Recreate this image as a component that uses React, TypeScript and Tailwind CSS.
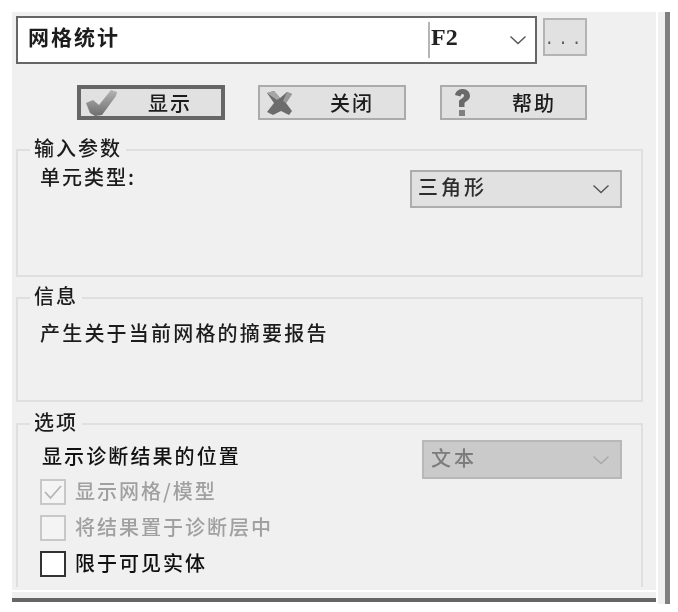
import React from "react";

const Chevron = ({ color = "#555" }: { color?: string }) => (
  <svg width="18" height="10" viewBox="0 0 18 10" fill="none">
    <path d="M1.5 1.5 L9 8.5 L16.5 1.5" stroke={color} strokeWidth="1.4" />
  </svg>
);

const CheckIcon = () => (
  <svg width="34" height="28" viewBox="0 0 34 28">
    <defs>
      <linearGradient id="ck" x1="0" y1="0" x2="0" y2="1">
        <stop offset="0" stopColor="#b4b4b4" />
        <stop offset="1" stopColor="#6e6e6e" />
      </linearGradient>
    </defs>
    <path d="M1 14 L8 11 L14 16 L26 1 L32 3 L31 7 L17 26 L10 27 L5 24 Z" fill="url(#ck)" />
  </svg>
);

const XIcon = () => (
  <svg width="28" height="26" viewBox="0 0 28 26">
    <path d="M1 3 L8 1 L14 8 L21 2 L26 4 L20 13 L26 21 L23 25 L15 21 L7 25 L1 22 L8 13 Z" fill="#6c6c6c" />
    <path d="M1 3 L8 1 L14 8 L11 10 Z" fill="#a6a6a6" />
    <path d="M21 2 L26 4 L20 13 L17 11 Z" fill="#9a9a9a" />
  </svg>
);

const HelpIcon = () => (
  <svg width="16" height="28" viewBox="0 0 16 28">
    <path d="M1 6 C2 1 6 0 9 0 C13 0 16 3 16 7 C16 11 12 12 10.5 14 L10.5 18 L5 18 L5 12 C6 10 10 9 10 6.5 C10 4.5 7 4 6.5 7.5 Z" fill="#6a6a6a" />
    <rect x="5" y="21" width="6" height="6" fill="#808080" />
  </svg>
);

const Btn = ({ children, label, wide, className }: { children: React.ReactNode; label: string; wide?: boolean; className: string }) => (
  <div className={`h-[35px] flex items-center bg-[#e1e1e1] ${wide ? "border-4 border-[#666666]" : "border-2 border-[#ababab]"} ${className}`}>
    <div className={`w-[40px] flex justify-center ${wide ? "ml-[1px]" : "ml-0"}`}>{children}</div>
    <span className={`text-[20px] leading-none tracking-[2px] font-medium text-[#1c1c1c] ${wide ? "ml-[26px]" : "ml-[30px]"}`}>{label}</span>
  </div>
);

const Group = ({ title, children, className, noBottom }: { title: string; children: React.ReactNode; className: string; noBottom?: boolean }) => (
  <fieldset className={`border-2 border-[#dfdfdf] ml-[4px] mr-[13px] px-[22px] ${noBottom ? "border-b-0" : ""} ${className}`}>
    <legend className="ml-[-10px] px-[4px] text-[20px] leading-[24px] tracking-[2px] font-medium text-[#1c1c1c] -translate-y-[2px]">{title}</legend>
    {children}
  </fieldset>
);

const Check = ({ label, state }: { label: string; state: "checked" | "off" | "on" }) => {
  const active = state === "on";
  return (
    <div className="flex items-center h-[26px] gap-[9px]">
      <div className={`w-[26px] h-[26px] flex items-center justify-center border-2 ${active ? "border-[#333] bg-white" : "border-[#c8c8c8] bg-[#f4f4f4]"}`}>
        {state === "checked" && (
          <svg width="20" height="16" viewBox="0 0 20 16" fill="none">
            <path d="M2 8 L7.5 14 L18 2" stroke="#b4b4b4" strokeWidth="1.8" />
          </svg>
        )}
      </div>
      <span className={`text-[20px] leading-none tracking-[2px] font-medium pb-[2px] ${active ? "text-[#111]" : "text-[#a0a0a0]"}`}>{label}</span>
    </div>
  );
};

export default function App() {
  return (
    <div className="w-[678px] h-[612px] bg-white overflow-hidden pt-[12px] pl-[12px] flex items-start" style={{ fontFamily: '"Noto Sans CJK SC", "Noto Sans", sans-serif' }}>
      <div className="w-[644px] shrink-0">
        <div className="h-[578px] bg-[#f0f0f0] pt-[4px] overflow-hidden blur-[0.5px]">
          <div className="flex items-start mx-[4px]">
            <div className="w-[521px] h-[48px] border-2 border-[#666666] bg-white flex items-center pl-[10px] pr-[8px]">
              <span className="w-[400px] text-[21px] font-bold tracking-[2px] text-[#1c1c1c] pb-[6px]">网格统计</span>
              <div className="w-[2px] h-[36px] bg-[#b5b5b5]" />
              <span className="ml-[1px] text-[24px] leading-none font-bold text-[#222] pb-[6px]" style={{ fontFamily: '"Liberation Serif", serif' }}>F2</span>
              <div className="ml-auto"><Chevron /></div>
            </div>
            <div className="ml-[6px] mt-[2px] w-[44px] h-[38px] border-2 border-[#b4b4b4] bg-[#e1e1e1] flex items-center justify-center text-[16px] tracking-[4px] text-[#555] pt-[5px]" style={{ fontFamily: '"Liberation Mono", monospace' }}>...</div>
          </div>

          <div className="flex mt-[21px] ml-[65px] gap-[33px]">
            <Btn label="显示" wide className="w-[148px]"><CheckIcon /></Btn>
            <Btn label="关闭" className="w-[148px]"><XIcon /></Btn>
            <div className="ml-[1px]"><Btn label="帮助" className="w-[147px]"><HelpIcon /></Btn></div>
          </div>

          <Group title="输入参数" className="mt-[18px] h-[139px]">
            <div className="flex items-start">
              <span className="mt-[1px] text-[20px] leading-[28px] tracking-[2px] font-medium text-[#1c1c1c]">单元类型:</span>
              <div className="ml-auto mr-[-3px] mt-[8px] w-[212px] h-[38px] bg-[#e1e1e1] border-2 border-[#adadad] flex items-center pl-[6px] pr-[10px]">
                <span className="text-[20px] leading-none tracking-[3px] font-medium text-[#2c2c2c] pb-[4px]">三角形</span>
                <div className="ml-auto"><Chevron /></div>
              </div>
            </div>
          </Group>

          <Group title="信息" className="mt-[9px] h-[116px]">
            <div className="mt-[11px] text-[20px] leading-[24px] tracking-[2.2px] font-medium text-[#1c1c1c]">产生关于当前网格的摘要报告</div>
          </Group>

          <Group title="选项" noBottom className="mt-[10px] h-[175px]">
            <div className="flex items-start h-[53px]">
              <span className="ml-[2px] mt-[6px] text-[20px] leading-[28px] tracking-[2.1px] font-medium text-[#111]">显示诊断结果的位置</span>
              <div className="ml-auto mr-[-3px] mt-[4px] w-[200px] h-[39px] bg-[#cacaca] border-2 border-[#b8b8b8] flex items-center pl-[7px] pr-[10px]">
                <span className="text-[20px] leading-none tracking-[3px] font-medium text-[#7c7c7c] pb-[4px]">文本</span>
                <div className="ml-auto"><Chevron color="#a8a8a8" /></div>
              </div>
            </div>
            <div className="flex flex-col gap-[10px] mt-[-10px]">
              <Check label="显示网格/模型" state="checked" />
              <Check label="将结果置于诊断层中" state="off" />
              <Check label="限于可见实体" state="on" />
            </div>
          </Group>
        </div>
        <div className="mt-[2px] h-[6px] bg-[#f0f0f0]" />
        <div className="h-[4px] bg-[#666666]" />
      </div>
      <div className="ml-[2px] w-[7px] h-[592px] bg-[#f0f0f0]" />
      <div className="w-[5px] h-[592px] bg-[#808080]" />
    </div>
  );
}
